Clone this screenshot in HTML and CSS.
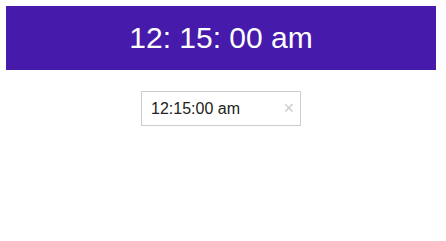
FILE: index.html
```html
<!DOCTYPE html>
<html lang="en">
<head>
    <meta charset="UTF-8">
    <title>Time Picker</title>
    <link rel="stylesheet" href="styles.css">
</head>
<body>
    <div class="app">
        <div class="clock-display">12: 15: 00 am</div>
        <div class="picker">
            <div class="time-input">
                <span class="time-value">12:15:00 am</span>
                <span class="clear">&times;</span>
            </div>
        </div>
    </div>
</body>
</html>
```

FILE: styles.css
```css
body {
    margin: 6px;
    font-family: 'Liberation Sans', Arial, sans-serif;
    background: #fff;
}
.app {
    width: 430px;
}
.clock-display {
    height: 64px;
    background-color: #461aab;
    color: #fff;
    font-size: 30px;
    display: flex;
    justify-content: center;
    align-items: center;
}
.picker {
    display: flex;
    justify-content: center;
    margin-top: 21px;
}
.time-input {
    box-sizing: border-box;
    width: 160px;
    height: 35px;
    border: 1px solid #ccc;
    display: flex;
    align-items: center;
    justify-content: space-between;
    padding: 0 6px 0 9px;
}
.time-value {
    font-size: 16px;
    color: #222;
}
.clear {
    color: #ccc;
    font-size: 18px;
}
```
